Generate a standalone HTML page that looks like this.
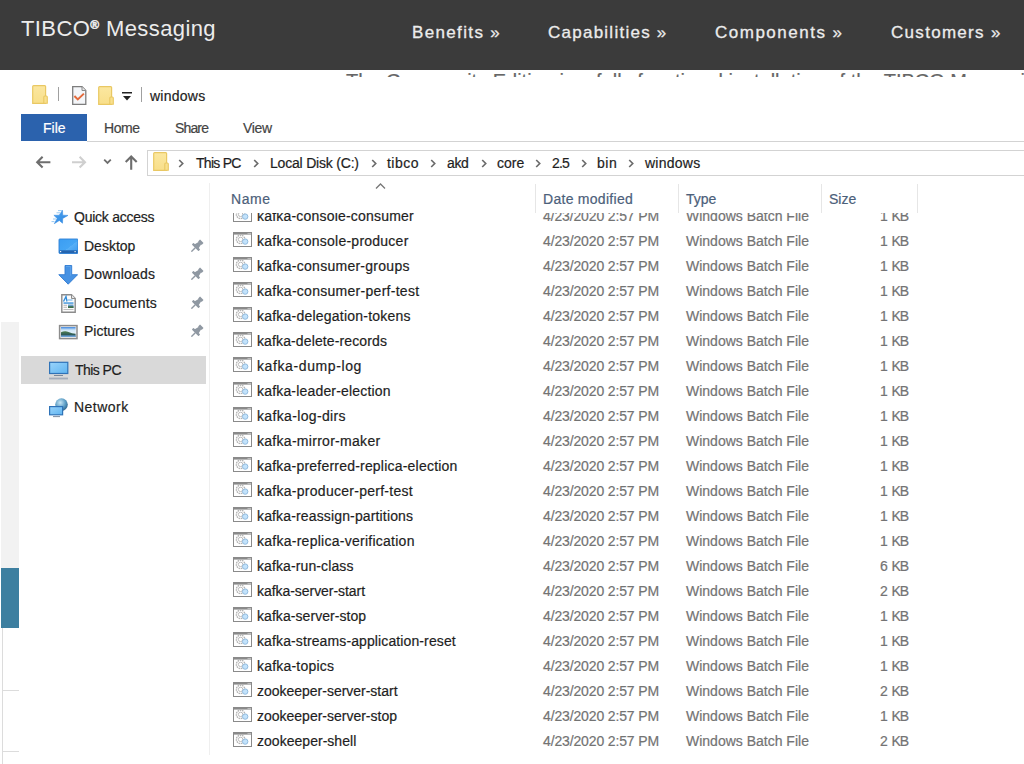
<!DOCTYPE html>
<html><head><meta charset="utf-8"><style>
html,body{margin:0;padding:0;width:1024px;height:764px;overflow:hidden;background:#fff;position:relative}
.t{position:absolute;white-space:pre;font-family:"Liberation Sans", sans-serif;-webkit-text-stroke:0.2px currentColor}
.r{position:absolute;display:block}
</style></head><body>
<div class="r" style="left:0px;top:0px;width:1024px;height:70px;background:#3b3b3b;"></div>
<div class="t" style="left:21px;top:17.68px;font-size:22px;line-height:22px;color:#ececec;font-weight:400;letter-spacing:0.4px;-webkit-text-stroke:0;">TIBCO<sup style="font-size:12px;vertical-align:0;position:relative;top:-7px;font-weight:700;-webkit-text-stroke:0.5px #ececec">®</sup> Messaging</div>
<div class="t" style="left:412px;top:24.01px;font-size:17px;line-height:17px;color:#ececec;font-weight:400;letter-spacing:1.35px;-webkit-text-stroke:0.3px #ececec;">Benefits »</div>
<div class="t" style="left:548px;top:24.01px;font-size:17px;line-height:17px;color:#ececec;font-weight:400;letter-spacing:1.25px;-webkit-text-stroke:0.3px #ececec;">Capabilities »</div>
<div class="t" style="left:715px;top:24.01px;font-size:17px;line-height:17px;color:#ececec;font-weight:400;letter-spacing:1.5px;-webkit-text-stroke:0.3px #ececec;">Components »</div>
<div class="t" style="left:891px;top:24.01px;font-size:17px;line-height:17px;color:#ececec;font-weight:400;letter-spacing:1.3px;-webkit-text-stroke:0.3px #ececec;">Customers »</div>
<div class="r" style="left:0;top:70px;width:1024px;height:7px;overflow:hidden"><div class="t" style="left:346px;top:1.4px;font-size:20px;line-height:20px;color:#666">The Community Edition is a fully functional installation of the TIBCO Messaging</div></div>
<div class="r" style="left:1px;top:322px;width:18px;height:246px;background:#f2f2f2;"></div>
<div class="r" style="left:1px;top:568px;width:18px;height:60px;background:#3d7fa0;"></div>
<div class="r" style="left:2px;top:628px;width:1px;height:136px;background:#dcdcdc;"></div>
<div class="r" style="left:2px;top:690px;width:17px;height:1px;background:#dcdcdc;"></div>
<div class="r" style="left:2px;top:751px;width:17px;height:1px;background:#dcdcdc;"></div>
<svg class="r" style="left:32px;top:85px;" width="16" height="19" viewBox="0 0 16 19"><defs><linearGradient id="gf3285" x1="0" y1="0" x2="0" y2="1"><stop offset="0" stop-color="#fbe7a0"/><stop offset="1" stop-color="#f8df8a"/></linearGradient></defs><path d="M0.7 1.6 Q0.7 0.7 1.6 0.7 H12.7 Q13.6 0.7 13.6 1.6 V18.3 H0.7 Z" fill="url(#gf3285)" stroke="#e9c863" stroke-width="1.2"/><path d="M11.8 18.3 V12 Q11.8 11 12.8 11 H14.4 Q15.3 11 15.3 12 V18.3 Z" fill="#f9e08e" stroke="#e9c863" stroke-width="1.1"/></svg>
<div class="r" style="left:58px;top:87px;width:1px;height:14px;background:#a0a0a0;"></div>
<svg class="r" style="left:72px;top:86px;" width="15" height="19" viewBox="0 0 15 19"><path d="M0.7 0.7 H10 L13.8 4.5 V18.3 H0.7 Z" fill="#f4f6f9" stroke="#7d7d7d" stroke-width="1.3"/><path d="M10 0.7 V4.5 H13.8" fill="#e8e8e8" stroke="#8a8a8a" stroke-width="1"/><path d="M2.4 10 L5.8 13.4 L11.9 7.6" fill="none" stroke="#e36a3c" stroke-width="2"/></svg>
<svg class="r" style="left:98px;top:86px;" width="16" height="19" viewBox="0 0 16 19"><defs><linearGradient id="gf9886" x1="0" y1="0" x2="0" y2="1"><stop offset="0" stop-color="#fbe7a0"/><stop offset="1" stop-color="#f8df8a"/></linearGradient></defs><path d="M0.7 1.6 Q0.7 0.7 1.6 0.7 H12.7 Q13.6 0.7 13.6 1.6 V18.3 H0.7 Z" fill="url(#gf9886)" stroke="#e9c863" stroke-width="1.2"/><path d="M11.8 18.3 V12 Q11.8 11 12.8 11 H14.4 Q15.3 11 15.3 12 V18.3 Z" fill="#f9e08e" stroke="#e9c863" stroke-width="1.1"/></svg>
<svg class="r" style="left:122px;top:92px;" width="10" height="9" viewBox="0 0 10 9"><rect x="0" y="0" width="10" height="1.5" fill="#222"/><path d="M1 4 H9 L5 8.5 Z" fill="#222"/></svg>
<div class="r" style="left:141px;top:87px;width:1px;height:15px;background:#a0a0a0;"></div>
<div class="t" style="left:150px;top:88.55px;font-size:14px;line-height:14px;color:#1e1e1e;font-weight:400;letter-spacing:0.25px;">windows</div>
<div class="r" style="left:21px;top:114px;width:66px;height:27px;background:#2b62ad;"></div>
<div class="t" style="left:43px;top:120.95px;font-size:14px;line-height:14px;color:#ffffff;font-weight:400;">File</div>
<div class="t" style="left:104px;top:121.15px;font-size:14px;line-height:14px;color:#444;font-weight:400;letter-spacing:-0.43px;">Home</div>
<div class="t" style="left:175px;top:121.15px;font-size:14px;line-height:14px;color:#444;font-weight:400;letter-spacing:-0.85px;">Share</div>
<div class="t" style="left:243px;top:121.15px;font-size:14px;line-height:14px;color:#444;font-weight:400;letter-spacing:-0.33px;">View</div>
<div class="r" style="left:87px;top:141px;width:937px;height:1px;background:#d3d3d3;"></div>
<svg class="r" style="left:35px;top:155px;" width="17" height="15" viewBox="0 0 17 15"><path d="M2.2 7.2 H15.4 M7.6 1.8 L2.2 7.2 L7.6 12.6" fill="none" stroke="#6e6e6e" stroke-width="2.1"/></svg>
<svg class="r" style="left:71px;top:155px;" width="17" height="15" viewBox="0 0 17 15"><path d="M14 7.2 H1 M8.6 1.8 L14 7.2 L8.6 12.6" fill="none" stroke="#cfcfcf" stroke-width="2.1"/></svg>
<svg class="r" style="left:103px;top:158px;" width="9" height="7" viewBox="0 0 9 7"><path d="M1.2 1.6 L4.5 4.9 L7.8 1.6" fill="none" stroke="#6e6e6e" stroke-width="1.8"/></svg>
<svg class="r" style="left:124px;top:154px;" width="15" height="17" viewBox="0 0 15 17"><path d="M7.2 15.8 V2.5 M1.7 8 L7.2 2.5 L12.7 8" fill="none" stroke="#6e6e6e" stroke-width="2.1"/></svg>
<div class="r" style="left:147px;top:150px;width:877px;height:26px;background:#fff;border:1px solid #d3d3d3;border-right:none;box-sizing:border-box"></div>
<svg class="r" style="left:153px;top:152px;" width="16" height="19" viewBox="0 0 16 19"><defs><linearGradient id="gf153152" x1="0" y1="0" x2="0" y2="1"><stop offset="0" stop-color="#fbe7a0"/><stop offset="1" stop-color="#f8df8a"/></linearGradient></defs><path d="M0.7 1.6 Q0.7 0.7 1.6 0.7 H12.7 Q13.6 0.7 13.6 1.6 V18.3 H0.7 Z" fill="url(#gf153152)" stroke="#e9c863" stroke-width="1.2"/><path d="M11.8 18.3 V12 Q11.8 11 12.8 11 H14.4 Q15.3 11 15.3 12 V18.3 Z" fill="#f9e08e" stroke="#e9c863" stroke-width="1.1"/></svg>
<svg class="r" style="left:178px;top:159px;" width="6" height="9" viewBox="0 0 6 9"><path d="M1.2 1 L4.7 4.5 L1.2 8" fill="none" stroke="#6b6b6b" stroke-width="1.7"/></svg>
<svg class="r" style="left:253px;top:159px;" width="6" height="9" viewBox="0 0 6 9"><path d="M1.2 1 L4.7 4.5 L1.2 8" fill="none" stroke="#6b6b6b" stroke-width="1.7"/></svg>
<svg class="r" style="left:371px;top:159px;" width="6" height="9" viewBox="0 0 6 9"><path d="M1.2 1 L4.7 4.5 L1.2 8" fill="none" stroke="#6b6b6b" stroke-width="1.7"/></svg>
<svg class="r" style="left:430px;top:159px;" width="6" height="9" viewBox="0 0 6 9"><path d="M1.2 1 L4.7 4.5 L1.2 8" fill="none" stroke="#6b6b6b" stroke-width="1.7"/></svg>
<svg class="r" style="left:481px;top:159px;" width="6" height="9" viewBox="0 0 6 9"><path d="M1.2 1 L4.7 4.5 L1.2 8" fill="none" stroke="#6b6b6b" stroke-width="1.7"/></svg>
<svg class="r" style="left:535px;top:159px;" width="6" height="9" viewBox="0 0 6 9"><path d="M1.2 1 L4.7 4.5 L1.2 8" fill="none" stroke="#6b6b6b" stroke-width="1.7"/></svg>
<svg class="r" style="left:581px;top:159px;" width="6" height="9" viewBox="0 0 6 9"><path d="M1.2 1 L4.7 4.5 L1.2 8" fill="none" stroke="#6b6b6b" stroke-width="1.7"/></svg>
<svg class="r" style="left:628px;top:159px;" width="6" height="9" viewBox="0 0 6 9"><path d="M1.2 1 L4.7 4.5 L1.2 8" fill="none" stroke="#6b6b6b" stroke-width="1.7"/></svg>
<div class="t" style="left:196px;top:155.85px;font-size:14px;line-height:14px;color:#1e1e1e;font-weight:400;letter-spacing:-0.73px;">This PC</div>
<div class="t" style="left:270px;top:155.85px;font-size:14px;line-height:14px;color:#1e1e1e;font-weight:400;letter-spacing:-0.2px;">Local Disk (C:)</div>
<div class="t" style="left:387px;top:155.85px;font-size:14px;line-height:14px;color:#1e1e1e;font-weight:400;letter-spacing:0.47px;">tibco</div>
<div class="t" style="left:447px;top:155.85px;font-size:14px;line-height:14px;color:#1e1e1e;font-weight:400;letter-spacing:-0.35px;">akd</div>
<div class="t" style="left:497px;top:155.85px;font-size:14px;line-height:14px;color:#1e1e1e;font-weight:400;">core</div>
<div class="t" style="left:552px;top:155.85px;font-size:14px;line-height:14px;color:#1e1e1e;font-weight:400;letter-spacing:-0.9px;">2.5</div>
<div class="t" style="left:597px;top:155.85px;font-size:14px;line-height:14px;color:#1e1e1e;font-weight:400;letter-spacing:0.55px;">bin</div>
<div class="t" style="left:645px;top:155.85px;font-size:14px;line-height:14px;color:#1e1e1e;font-weight:400;letter-spacing:0.25px;">windows</div>
<div class="r" style="left:209px;top:183px;width:1px;height:572px;background:#efefef;"></div>
<div class="r" style="left:21px;top:356px;width:185px;height:28px;background:#d9d9d9;"></div>
<div class="t" style="left:74px;top:210.15px;font-size:14px;line-height:14px;color:#1e1e1e;font-weight:400;letter-spacing:-0.24px;">Quick access</div>
<div class="t" style="left:84px;top:238.95px;font-size:14px;line-height:14px;color:#1e1e1e;font-weight:400;">Desktop</div>
<div class="t" style="left:84px;top:267.15px;font-size:14px;line-height:14px;color:#1e1e1e;font-weight:400;letter-spacing:0.21px;">Downloads</div>
<div class="t" style="left:84px;top:296.15px;font-size:14px;line-height:14px;color:#1e1e1e;font-weight:400;letter-spacing:0.25px;">Documents</div>
<div class="t" style="left:84px;top:324.45px;font-size:14px;line-height:14px;color:#1e1e1e;font-weight:400;">Pictures</div>
<div class="t" style="left:75px;top:362.95px;font-size:14px;line-height:14px;color:#1e1e1e;font-weight:400;letter-spacing:-0.55px;">This PC</div>
<div class="t" style="left:74px;top:400.45px;font-size:14px;line-height:14px;color:#1e1e1e;font-weight:400;letter-spacing:0.47px;">Network</div>
<svg class="r" style="left:46px;top:204px;" width="36" height="24" viewBox="0 0 36 24"><defs><linearGradient id="gs" x1="0" y1="0" x2="1" y2="1"><stop offset="0" stop-color="#4aa3f0"/><stop offset="1" stop-color="#2f86e0"/></linearGradient></defs><path d="M16.5,6.3 L16.7,11.2 L22.0,11.4 L16.7,14.4 L16.5,19.2 L13.3,16.5 L8.3,19.7 L11.2,14.5 L7.9,11.3 L13.2,11.2 Z" fill="url(#gs)" stroke="#3a8ee4" stroke-width="0.6" stroke-linejoin="round"/><path d="M12 6.6 H16 M10.5 8.8 H14.2 M7 15 H10 M5.5 17.6 H8.5" stroke="#8cc3f2" stroke-width="0.9"/></svg>
<svg class="r" style="left:58px;top:238px;" width="20" height="16" viewBox="0 0 20 16"><defs><linearGradient id="gd" x1="0" y1="0" x2="1" y2="1"><stop offset="0" stop-color="#3b9df2"/><stop offset="0.55" stop-color="#45a6f5"/><stop offset="0.56" stop-color="#57b0f7"/><stop offset="1" stop-color="#3a98ee"/></linearGradient></defs><rect x="1" y="1" width="19" height="14.5" rx="0.8" fill="url(#gd)" stroke="#2d7fd6" stroke-width="0.9"/><rect x="1.5" y="12.3" width="18" height="2.8" fill="#2564ae"/><rect x="2" y="13" width="1.2" height="1.2" fill="#e8f2fb"/><rect x="16.5" y="13" width="1.2" height="1.2" fill="#e8f2fb"/></svg>
<svg class="r" style="left:58px;top:265px;" width="20" height="20" viewBox="0 0 20 20"><path d="M7 0.5 H13.7 V9.7 H19.6 L10.2 19.2 L0.8 9.7 H7 Z" fill="#4792e3" stroke="#2f7bd2" stroke-width="0.9" stroke-linejoin="round"/><path d="M8 1.5 H12.7 V10.7" fill="none" stroke="#63a8ee" stroke-width="0.8"/></svg>
<svg class="r" style="left:61px;top:294px;" width="15" height="19" viewBox="0 0 15 19"><path d="M0.8 0.8 H10.5 L14.2 4.5 V18.2 H0.8 Z" fill="#fbfbfb" stroke="#8c8c8c" stroke-width="1.4"/><path d="M10.5 0.8 V4.5 H14.2" fill="#e6e6e6" stroke="#8c8c8c" stroke-width="1"/><path d="M2.5 7.5 L5 2.5 L6 7.5" fill="none" stroke="#2e8ad8" stroke-width="1.3"/><rect x="6.5" y="5.5" width="5" height="1" fill="#6ab0e8"/><rect x="2.5" y="8.4" width="10" height="1.3" fill="#2e8ad8"/><rect x="2.5" y="10.8" width="3.5" height="0.9" fill="#b0b0b0"/><rect x="2.5" y="12.8" width="3.5" height="0.9" fill="#b0b0b0"/><rect x="7" y="10.5" width="5.5" height="3.5" fill="#6a9ec8"/><rect x="7" y="12.2" width="5.5" height="1.8" fill="#3c6e4a"/><rect x="2.5" y="15" width="10" height="0.9" fill="#b8b8b8"/></svg>
<svg class="r" style="left:58px;top:324px;" width="20" height="16" viewBox="0 0 20 16"><defs><linearGradient id="gp" x1="0" y1="0" x2="0" y2="1"><stop offset="0" stop-color="#3f86de"/><stop offset="0.3" stop-color="#cfe6f7"/><stop offset="1" stop-color="#f2f8fc"/></linearGradient><linearGradient id="gh" x1="0" y1="0" x2="0" y2="1"><stop offset="0" stop-color="#4d7d4e"/><stop offset="0.6" stop-color="#2f5a5a"/><stop offset="1" stop-color="#5b93c9"/></linearGradient></defs><rect x="1.6" y="1.6" width="17.4" height="13" fill="#f3f3f3" stroke="#8c8c8c" stroke-width="1.5"/><rect x="3" y="3" width="14.6" height="10" fill="url(#gp)"/><path d="M3 8.3 Q7 6.6 10.5 8 Q14 9.4 17.6 9.8 V13 H3 Z" fill="url(#gh)"/><rect x="3" y="11.6" width="14.6" height="1.4" fill="#6aa0d4"/></svg>
<svg class="r" style="left:188px;top:238px;" width="17" height="17" viewBox="0 0 17 17"><g transform="rotate(45 8.5 8.5)" fill="#8f98a2"><rect x="6" y="1" width="5" height="2.8" rx="0.4"/><path d="M6.8 3.4 H10.2 L11.4 8.6 H5.6 Z"/><rect x="3.8" y="8" width="9.4" height="2.4" rx="0.6"/><rect x="7.8" y="10" width="1.4" height="5.8" rx="0.6"/></g></svg>
<svg class="r" style="left:188px;top:266px;" width="17" height="17" viewBox="0 0 17 17"><g transform="rotate(45 8.5 8.5)" fill="#8f98a2"><rect x="6" y="1" width="5" height="2.8" rx="0.4"/><path d="M6.8 3.4 H10.2 L11.4 8.6 H5.6 Z"/><rect x="3.8" y="8" width="9.4" height="2.4" rx="0.6"/><rect x="7.8" y="10" width="1.4" height="5.8" rx="0.6"/></g></svg>
<svg class="r" style="left:188px;top:295px;" width="17" height="17" viewBox="0 0 17 17"><g transform="rotate(45 8.5 8.5)" fill="#8f98a2"><rect x="6" y="1" width="5" height="2.8" rx="0.4"/><path d="M6.8 3.4 H10.2 L11.4 8.6 H5.6 Z"/><rect x="3.8" y="8" width="9.4" height="2.4" rx="0.6"/><rect x="7.8" y="10" width="1.4" height="5.8" rx="0.6"/></g></svg>
<svg class="r" style="left:188px;top:323px;" width="17" height="17" viewBox="0 0 17 17"><g transform="rotate(45 8.5 8.5)" fill="#8f98a2"><rect x="6" y="1" width="5" height="2.8" rx="0.4"/><path d="M6.8 3.4 H10.2 L11.4 8.6 H5.6 Z"/><rect x="3.8" y="8" width="9.4" height="2.4" rx="0.6"/><rect x="7.8" y="10" width="1.4" height="5.8" rx="0.6"/></g></svg>
<svg class="r" style="left:48px;top:361px;" width="22" height="20" viewBox="0 0 22 20"><defs><linearGradient id="gm" x1="0" y1="0" x2="1" y2="1"><stop offset="0" stop-color="#9ad4fb"/><stop offset="1" stop-color="#5fb4f0"/></linearGradient></defs><rect x="1.6" y="1.3" width="18.2" height="11.2" fill="url(#gm)" stroke="#2f73b8" stroke-width="1.2"/><rect x="6" y="14" width="9" height="0.9" fill="#6f7f95"/><rect x="1" y="16.6" width="19" height="1.8" fill="#a4adbb"/></svg>
<svg class="r" style="left:48px;top:397px;" width="22" height="22" viewBox="0 0 22 22"><defs><radialGradient id="gg" cx="0.4" cy="0.35" r="0.7"><stop offset="0" stop-color="#c8e6f5"/><stop offset="0.6" stop-color="#5a9cc4"/><stop offset="1" stop-color="#2e5f86"/></radialGradient></defs><circle cx="13.5" cy="7.6" r="6.3" fill="url(#gg)"/><rect x="1.6" y="9.6" width="13" height="8.2" fill="url(#gm)" stroke="#2f73b8" stroke-width="1.2"/><rect x="5" y="19.2" width="7" height="0.9" fill="#6f7f95"/></svg>
<div class="t" style="left:231px;top:192.05px;font-size:14px;line-height:14px;color:#4c607a;font-weight:400;letter-spacing:0.57px;">Name</div>
<svg class="r" style="left:375px;top:183.4px;" width="11" height="6" viewBox="0 0 11 6"><path d="M1 5.5 L5.5 1 L10 5.5" fill="none" stroke="#777" stroke-width="1.3"/></svg>
<div class="r" style="left:535px;top:184px;width:1px;height:29px;background:#e6e6e6;"></div>
<div class="r" style="left:678px;top:184px;width:1px;height:29px;background:#e6e6e6;"></div>
<div class="r" style="left:821px;top:184px;width:1px;height:29px;background:#e6e6e6;"></div>
<div class="r" style="left:917px;top:184px;width:1px;height:29px;background:#e6e6e6;"></div>
<div class="t" style="left:543px;top:192.05px;font-size:14px;line-height:14px;color:#4c607a;font-weight:400;letter-spacing:0.28px;">Date modified</div>
<div class="t" style="left:686px;top:192.05px;font-size:14px;line-height:14px;color:#4c607a;font-weight:400;">Type</div>
<div class="t" style="left:829px;top:192.05px;font-size:14px;line-height:14px;color:#4c607a;font-weight:400;">Size</div>
<div class="r" style="left:210px;top:213px;width:814px;height:542px;overflow:hidden"><div style="position:absolute;left:-210px;top:-213px;width:1024px;height:764px"><svg class="r" style="left:233px;top:207px" width="19" height="15" viewBox="0 0 19 15"><rect x="0.5" y="0.5" width="18" height="14" fill="#fff" stroke="#8a8a8a"/><rect x="0" y="0" width="19" height="2.6" fill="#8a8a8a"/><rect x="14.5" y="1" width="3.5" height="1.3" fill="#bdbdbd"/><circle cx="7.6" cy="7.4" r="4.2" fill="none" stroke="#b4b4b4" stroke-width="1.4" stroke-dasharray="1.6 0.7"/><circle cx="7.6" cy="7.4" r="2.2" fill="none" stroke="#bcbcbc" stroke-width="1"/><circle cx="12.2" cy="9.6" r="2.7" fill="#c2e2fb" stroke="#8ab6da" stroke-width="0.9"/></svg><div class="t" style="left:257px;top:209.15px;font-size:14px;line-height:14px;color:#1e1e1e;letter-spacing:0.2px">kafka-console-consumer</div><div class="t" style="left:543px;top:209.15px;font-size:14px;line-height:14px;color:#737373;letter-spacing:-0.14px">4/23/2020 2:57 PM</div><div class="t" style="left:686px;top:209.15px;font-size:14px;line-height:14px;color:#737373">Windows Batch File</div><div class="t" style="left:880px;top:209.15px;font-size:14px;line-height:14px;color:#737373">1</div><div class="t" style="left:891.5px;letter-spacing:-1.2px;top:209.15px;font-size:14px;line-height:14px;color:#737373">KB</div><svg class="r" style="left:233px;top:232px" width="19" height="15" viewBox="0 0 19 15"><rect x="0.5" y="0.5" width="18" height="14" fill="#fff" stroke="#8a8a8a"/><rect x="0" y="0" width="19" height="2.6" fill="#8a8a8a"/><rect x="14.5" y="1" width="3.5" height="1.3" fill="#bdbdbd"/><circle cx="7.6" cy="7.4" r="4.2" fill="none" stroke="#b4b4b4" stroke-width="1.4" stroke-dasharray="1.6 0.7"/><circle cx="7.6" cy="7.4" r="2.2" fill="none" stroke="#bcbcbc" stroke-width="1"/><circle cx="12.2" cy="9.6" r="2.7" fill="#c2e2fb" stroke="#8ab6da" stroke-width="0.9"/></svg><div class="t" style="left:257px;top:234.15px;font-size:14px;line-height:14px;color:#1e1e1e;letter-spacing:0.238px">kafka-console-producer</div><div class="t" style="left:543px;top:234.15px;font-size:14px;line-height:14px;color:#737373;letter-spacing:-0.14px">4/23/2020 2:57 PM</div><div class="t" style="left:686px;top:234.15px;font-size:14px;line-height:14px;color:#737373">Windows Batch File</div><div class="t" style="left:880px;top:234.15px;font-size:14px;line-height:14px;color:#737373">1</div><div class="t" style="left:891.5px;letter-spacing:-1.2px;top:234.15px;font-size:14px;line-height:14px;color:#737373">KB</div><svg class="r" style="left:233px;top:257px" width="19" height="15" viewBox="0 0 19 15"><rect x="0.5" y="0.5" width="18" height="14" fill="#fff" stroke="#8a8a8a"/><rect x="0" y="0" width="19" height="2.6" fill="#8a8a8a"/><rect x="14.5" y="1" width="3.5" height="1.3" fill="#bdbdbd"/><circle cx="7.6" cy="7.4" r="4.2" fill="none" stroke="#b4b4b4" stroke-width="1.4" stroke-dasharray="1.6 0.7"/><circle cx="7.6" cy="7.4" r="2.2" fill="none" stroke="#bcbcbc" stroke-width="1"/><circle cx="12.2" cy="9.6" r="2.7" fill="#c2e2fb" stroke="#8ab6da" stroke-width="0.9"/></svg><div class="t" style="left:257px;top:259.15px;font-size:14px;line-height:14px;color:#1e1e1e;letter-spacing:0.27px">kafka-consumer-groups</div><div class="t" style="left:543px;top:259.15px;font-size:14px;line-height:14px;color:#737373;letter-spacing:-0.14px">4/23/2020 2:57 PM</div><div class="t" style="left:686px;top:259.15px;font-size:14px;line-height:14px;color:#737373">Windows Batch File</div><div class="t" style="left:880px;top:259.15px;font-size:14px;line-height:14px;color:#737373">1</div><div class="t" style="left:891.5px;letter-spacing:-1.2px;top:259.15px;font-size:14px;line-height:14px;color:#737373">KB</div><svg class="r" style="left:233px;top:282px" width="19" height="15" viewBox="0 0 19 15"><rect x="0.5" y="0.5" width="18" height="14" fill="#fff" stroke="#8a8a8a"/><rect x="0" y="0" width="19" height="2.6" fill="#8a8a8a"/><rect x="14.5" y="1" width="3.5" height="1.3" fill="#bdbdbd"/><circle cx="7.6" cy="7.4" r="4.2" fill="none" stroke="#b4b4b4" stroke-width="1.4" stroke-dasharray="1.6 0.7"/><circle cx="7.6" cy="7.4" r="2.2" fill="none" stroke="#bcbcbc" stroke-width="1"/><circle cx="12.2" cy="9.6" r="2.7" fill="#c2e2fb" stroke="#8ab6da" stroke-width="0.9"/></svg><div class="t" style="left:257px;top:284.15px;font-size:14px;line-height:14px;color:#1e1e1e;letter-spacing:0.283px">kafka-consumer-perf-test</div><div class="t" style="left:543px;top:284.15px;font-size:14px;line-height:14px;color:#737373;letter-spacing:-0.14px">4/23/2020 2:57 PM</div><div class="t" style="left:686px;top:284.15px;font-size:14px;line-height:14px;color:#737373">Windows Batch File</div><div class="t" style="left:880px;top:284.15px;font-size:14px;line-height:14px;color:#737373">1</div><div class="t" style="left:891.5px;letter-spacing:-1.2px;top:284.15px;font-size:14px;line-height:14px;color:#737373">KB</div><svg class="r" style="left:233px;top:307px" width="19" height="15" viewBox="0 0 19 15"><rect x="0.5" y="0.5" width="18" height="14" fill="#fff" stroke="#8a8a8a"/><rect x="0" y="0" width="19" height="2.6" fill="#8a8a8a"/><rect x="14.5" y="1" width="3.5" height="1.3" fill="#bdbdbd"/><circle cx="7.6" cy="7.4" r="4.2" fill="none" stroke="#b4b4b4" stroke-width="1.4" stroke-dasharray="1.6 0.7"/><circle cx="7.6" cy="7.4" r="2.2" fill="none" stroke="#bcbcbc" stroke-width="1"/><circle cx="12.2" cy="9.6" r="2.7" fill="#c2e2fb" stroke="#8ab6da" stroke-width="0.9"/></svg><div class="t" style="left:257px;top:309.15px;font-size:14px;line-height:14px;color:#1e1e1e;letter-spacing:0.223px">kafka-delegation-tokens</div><div class="t" style="left:543px;top:309.15px;font-size:14px;line-height:14px;color:#737373;letter-spacing:-0.14px">4/23/2020 2:57 PM</div><div class="t" style="left:686px;top:309.15px;font-size:14px;line-height:14px;color:#737373">Windows Batch File</div><div class="t" style="left:880px;top:309.15px;font-size:14px;line-height:14px;color:#737373">1</div><div class="t" style="left:891.5px;letter-spacing:-1.2px;top:309.15px;font-size:14px;line-height:14px;color:#737373">KB</div><svg class="r" style="left:233px;top:332px" width="19" height="15" viewBox="0 0 19 15"><rect x="0.5" y="0.5" width="18" height="14" fill="#fff" stroke="#8a8a8a"/><rect x="0" y="0" width="19" height="2.6" fill="#8a8a8a"/><rect x="14.5" y="1" width="3.5" height="1.3" fill="#bdbdbd"/><circle cx="7.6" cy="7.4" r="4.2" fill="none" stroke="#b4b4b4" stroke-width="1.4" stroke-dasharray="1.6 0.7"/><circle cx="7.6" cy="7.4" r="2.2" fill="none" stroke="#bcbcbc" stroke-width="1"/><circle cx="12.2" cy="9.6" r="2.7" fill="#c2e2fb" stroke="#8ab6da" stroke-width="0.9"/></svg><div class="t" style="left:257px;top:334.15px;font-size:14px;line-height:14px;color:#1e1e1e;letter-spacing:0.121px">kafka-delete-records</div><div class="t" style="left:543px;top:334.15px;font-size:14px;line-height:14px;color:#737373;letter-spacing:-0.14px">4/23/2020 2:57 PM</div><div class="t" style="left:686px;top:334.15px;font-size:14px;line-height:14px;color:#737373">Windows Batch File</div><div class="t" style="left:880px;top:334.15px;font-size:14px;line-height:14px;color:#737373">1</div><div class="t" style="left:891.5px;letter-spacing:-1.2px;top:334.15px;font-size:14px;line-height:14px;color:#737373">KB</div><svg class="r" style="left:233px;top:357px" width="19" height="15" viewBox="0 0 19 15"><rect x="0.5" y="0.5" width="18" height="14" fill="#fff" stroke="#8a8a8a"/><rect x="0" y="0" width="19" height="2.6" fill="#8a8a8a"/><rect x="14.5" y="1" width="3.5" height="1.3" fill="#bdbdbd"/><circle cx="7.6" cy="7.4" r="4.2" fill="none" stroke="#b4b4b4" stroke-width="1.4" stroke-dasharray="1.6 0.7"/><circle cx="7.6" cy="7.4" r="2.2" fill="none" stroke="#bcbcbc" stroke-width="1"/><circle cx="12.2" cy="9.6" r="2.7" fill="#c2e2fb" stroke="#8ab6da" stroke-width="0.9"/></svg><div class="t" style="left:257px;top:359.15px;font-size:14px;line-height:14px;color:#1e1e1e;letter-spacing:0.608px">kafka-dump-log</div><div class="t" style="left:543px;top:359.15px;font-size:14px;line-height:14px;color:#737373;letter-spacing:-0.14px">4/23/2020 2:57 PM</div><div class="t" style="left:686px;top:359.15px;font-size:14px;line-height:14px;color:#737373">Windows Batch File</div><div class="t" style="left:880px;top:359.15px;font-size:14px;line-height:14px;color:#737373">1</div><div class="t" style="left:891.5px;letter-spacing:-1.2px;top:359.15px;font-size:14px;line-height:14px;color:#737373">KB</div><svg class="r" style="left:233px;top:382px" width="19" height="15" viewBox="0 0 19 15"><rect x="0.5" y="0.5" width="18" height="14" fill="#fff" stroke="#8a8a8a"/><rect x="0" y="0" width="19" height="2.6" fill="#8a8a8a"/><rect x="14.5" y="1" width="3.5" height="1.3" fill="#bdbdbd"/><circle cx="7.6" cy="7.4" r="4.2" fill="none" stroke="#b4b4b4" stroke-width="1.4" stroke-dasharray="1.6 0.7"/><circle cx="7.6" cy="7.4" r="2.2" fill="none" stroke="#bcbcbc" stroke-width="1"/><circle cx="12.2" cy="9.6" r="2.7" fill="#c2e2fb" stroke="#8ab6da" stroke-width="0.9"/></svg><div class="t" style="left:257px;top:384.15px;font-size:14px;line-height:14px;color:#1e1e1e;letter-spacing:0.18px">kafka-leader-election</div><div class="t" style="left:543px;top:384.15px;font-size:14px;line-height:14px;color:#737373;letter-spacing:-0.14px">4/23/2020 2:57 PM</div><div class="t" style="left:686px;top:384.15px;font-size:14px;line-height:14px;color:#737373">Windows Batch File</div><div class="t" style="left:880px;top:384.15px;font-size:14px;line-height:14px;color:#737373">1</div><div class="t" style="left:891.5px;letter-spacing:-1.2px;top:384.15px;font-size:14px;line-height:14px;color:#737373">KB</div><svg class="r" style="left:233px;top:407px" width="19" height="15" viewBox="0 0 19 15"><rect x="0.5" y="0.5" width="18" height="14" fill="#fff" stroke="#8a8a8a"/><rect x="0" y="0" width="19" height="2.6" fill="#8a8a8a"/><rect x="14.5" y="1" width="3.5" height="1.3" fill="#bdbdbd"/><circle cx="7.6" cy="7.4" r="4.2" fill="none" stroke="#b4b4b4" stroke-width="1.4" stroke-dasharray="1.6 0.7"/><circle cx="7.6" cy="7.4" r="2.2" fill="none" stroke="#bcbcbc" stroke-width="1"/><circle cx="12.2" cy="9.6" r="2.7" fill="#c2e2fb" stroke="#8ab6da" stroke-width="0.9"/></svg><div class="t" style="left:257px;top:409.15px;font-size:14px;line-height:14px;color:#1e1e1e;letter-spacing:0.346px">kafka-log-dirs</div><div class="t" style="left:543px;top:409.15px;font-size:14px;line-height:14px;color:#737373;letter-spacing:-0.14px">4/23/2020 2:57 PM</div><div class="t" style="left:686px;top:409.15px;font-size:14px;line-height:14px;color:#737373">Windows Batch File</div><div class="t" style="left:880px;top:409.15px;font-size:14px;line-height:14px;color:#737373">1</div><div class="t" style="left:891.5px;letter-spacing:-1.2px;top:409.15px;font-size:14px;line-height:14px;color:#737373">KB</div><svg class="r" style="left:233px;top:432px" width="19" height="15" viewBox="0 0 19 15"><rect x="0.5" y="0.5" width="18" height="14" fill="#fff" stroke="#8a8a8a"/><rect x="0" y="0" width="19" height="2.6" fill="#8a8a8a"/><rect x="14.5" y="1" width="3.5" height="1.3" fill="#bdbdbd"/><circle cx="7.6" cy="7.4" r="4.2" fill="none" stroke="#b4b4b4" stroke-width="1.4" stroke-dasharray="1.6 0.7"/><circle cx="7.6" cy="7.4" r="2.2" fill="none" stroke="#bcbcbc" stroke-width="1"/><circle cx="12.2" cy="9.6" r="2.7" fill="#c2e2fb" stroke="#8ab6da" stroke-width="0.9"/></svg><div class="t" style="left:257px;top:434.15px;font-size:14px;line-height:14px;color:#1e1e1e;letter-spacing:0.288px">kafka-mirror-maker</div><div class="t" style="left:543px;top:434.15px;font-size:14px;line-height:14px;color:#737373;letter-spacing:-0.14px">4/23/2020 2:57 PM</div><div class="t" style="left:686px;top:434.15px;font-size:14px;line-height:14px;color:#737373">Windows Batch File</div><div class="t" style="left:880px;top:434.15px;font-size:14px;line-height:14px;color:#737373">1</div><div class="t" style="left:891.5px;letter-spacing:-1.2px;top:434.15px;font-size:14px;line-height:14px;color:#737373">KB</div><svg class="r" style="left:233px;top:457px" width="19" height="15" viewBox="0 0 19 15"><rect x="0.5" y="0.5" width="18" height="14" fill="#fff" stroke="#8a8a8a"/><rect x="0" y="0" width="19" height="2.6" fill="#8a8a8a"/><rect x="14.5" y="1" width="3.5" height="1.3" fill="#bdbdbd"/><circle cx="7.6" cy="7.4" r="4.2" fill="none" stroke="#b4b4b4" stroke-width="1.4" stroke-dasharray="1.6 0.7"/><circle cx="7.6" cy="7.4" r="2.2" fill="none" stroke="#bcbcbc" stroke-width="1"/><circle cx="12.2" cy="9.6" r="2.7" fill="#c2e2fb" stroke="#8ab6da" stroke-width="0.9"/></svg><div class="t" style="left:257px;top:459.15px;font-size:14px;line-height:14px;color:#1e1e1e;letter-spacing:0.213px">kafka-preferred-replica-election</div><div class="t" style="left:543px;top:459.15px;font-size:14px;line-height:14px;color:#737373;letter-spacing:-0.14px">4/23/2020 2:57 PM</div><div class="t" style="left:686px;top:459.15px;font-size:14px;line-height:14px;color:#737373">Windows Batch File</div><div class="t" style="left:880px;top:459.15px;font-size:14px;line-height:14px;color:#737373">1</div><div class="t" style="left:891.5px;letter-spacing:-1.2px;top:459.15px;font-size:14px;line-height:14px;color:#737373">KB</div><svg class="r" style="left:233px;top:482px" width="19" height="15" viewBox="0 0 19 15"><rect x="0.5" y="0.5" width="18" height="14" fill="#fff" stroke="#8a8a8a"/><rect x="0" y="0" width="19" height="2.6" fill="#8a8a8a"/><rect x="14.5" y="1" width="3.5" height="1.3" fill="#bdbdbd"/><circle cx="7.6" cy="7.4" r="4.2" fill="none" stroke="#b4b4b4" stroke-width="1.4" stroke-dasharray="1.6 0.7"/><circle cx="7.6" cy="7.4" r="2.2" fill="none" stroke="#bcbcbc" stroke-width="1"/><circle cx="12.2" cy="9.6" r="2.7" fill="#c2e2fb" stroke="#8ab6da" stroke-width="0.9"/></svg><div class="t" style="left:257px;top:484.15px;font-size:14px;line-height:14px;color:#1e1e1e;letter-spacing:0.274px">kafka-producer-perf-test</div><div class="t" style="left:543px;top:484.15px;font-size:14px;line-height:14px;color:#737373;letter-spacing:-0.14px">4/23/2020 2:57 PM</div><div class="t" style="left:686px;top:484.15px;font-size:14px;line-height:14px;color:#737373">Windows Batch File</div><div class="t" style="left:880px;top:484.15px;font-size:14px;line-height:14px;color:#737373">1</div><div class="t" style="left:891.5px;letter-spacing:-1.2px;top:484.15px;font-size:14px;line-height:14px;color:#737373">KB</div><svg class="r" style="left:233px;top:507px" width="19" height="15" viewBox="0 0 19 15"><rect x="0.5" y="0.5" width="18" height="14" fill="#fff" stroke="#8a8a8a"/><rect x="0" y="0" width="19" height="2.6" fill="#8a8a8a"/><rect x="14.5" y="1" width="3.5" height="1.3" fill="#bdbdbd"/><circle cx="7.6" cy="7.4" r="4.2" fill="none" stroke="#b4b4b4" stroke-width="1.4" stroke-dasharray="1.6 0.7"/><circle cx="7.6" cy="7.4" r="2.2" fill="none" stroke="#bcbcbc" stroke-width="1"/><circle cx="12.2" cy="9.6" r="2.7" fill="#c2e2fb" stroke="#8ab6da" stroke-width="0.9"/></svg><div class="t" style="left:257px;top:509.15px;font-size:14px;line-height:14px;color:#1e1e1e;letter-spacing:0.146px">kafka-reassign-partitions</div><div class="t" style="left:543px;top:509.15px;font-size:14px;line-height:14px;color:#737373;letter-spacing:-0.14px">4/23/2020 2:57 PM</div><div class="t" style="left:686px;top:509.15px;font-size:14px;line-height:14px;color:#737373">Windows Batch File</div><div class="t" style="left:880px;top:509.15px;font-size:14px;line-height:14px;color:#737373">1</div><div class="t" style="left:891.5px;letter-spacing:-1.2px;top:509.15px;font-size:14px;line-height:14px;color:#737373">KB</div><svg class="r" style="left:233px;top:532px" width="19" height="15" viewBox="0 0 19 15"><rect x="0.5" y="0.5" width="18" height="14" fill="#fff" stroke="#8a8a8a"/><rect x="0" y="0" width="19" height="2.6" fill="#8a8a8a"/><rect x="14.5" y="1" width="3.5" height="1.3" fill="#bdbdbd"/><circle cx="7.6" cy="7.4" r="4.2" fill="none" stroke="#b4b4b4" stroke-width="1.4" stroke-dasharray="1.6 0.7"/><circle cx="7.6" cy="7.4" r="2.2" fill="none" stroke="#bcbcbc" stroke-width="1"/><circle cx="12.2" cy="9.6" r="2.7" fill="#c2e2fb" stroke="#8ab6da" stroke-width="0.9"/></svg><div class="t" style="left:257px;top:534.15px;font-size:14px;line-height:14px;color:#1e1e1e;letter-spacing:0.26px">kafka-replica-verification</div><div class="t" style="left:543px;top:534.15px;font-size:14px;line-height:14px;color:#737373;letter-spacing:-0.14px">4/23/2020 2:57 PM</div><div class="t" style="left:686px;top:534.15px;font-size:14px;line-height:14px;color:#737373">Windows Batch File</div><div class="t" style="left:880px;top:534.15px;font-size:14px;line-height:14px;color:#737373">1</div><div class="t" style="left:891.5px;letter-spacing:-1.2px;top:534.15px;font-size:14px;line-height:14px;color:#737373">KB</div><svg class="r" style="left:233px;top:557px" width="19" height="15" viewBox="0 0 19 15"><rect x="0.5" y="0.5" width="18" height="14" fill="#fff" stroke="#8a8a8a"/><rect x="0" y="0" width="19" height="2.6" fill="#8a8a8a"/><rect x="14.5" y="1" width="3.5" height="1.3" fill="#bdbdbd"/><circle cx="7.6" cy="7.4" r="4.2" fill="none" stroke="#b4b4b4" stroke-width="1.4" stroke-dasharray="1.6 0.7"/><circle cx="7.6" cy="7.4" r="2.2" fill="none" stroke="#bcbcbc" stroke-width="1"/><circle cx="12.2" cy="9.6" r="2.7" fill="#c2e2fb" stroke="#8ab6da" stroke-width="0.9"/></svg><div class="t" style="left:257px;top:559.15px;font-size:14px;line-height:14px;color:#1e1e1e;letter-spacing:0.107px">kafka-run-class</div><div class="t" style="left:543px;top:559.15px;font-size:14px;line-height:14px;color:#737373;letter-spacing:-0.14px">4/23/2020 2:57 PM</div><div class="t" style="left:686px;top:559.15px;font-size:14px;line-height:14px;color:#737373">Windows Batch File</div><div class="t" style="left:880px;top:559.15px;font-size:14px;line-height:14px;color:#737373">6</div><div class="t" style="left:891.5px;letter-spacing:-1.2px;top:559.15px;font-size:14px;line-height:14px;color:#737373">KB</div><svg class="r" style="left:233px;top:582px" width="19" height="15" viewBox="0 0 19 15"><rect x="0.5" y="0.5" width="18" height="14" fill="#fff" stroke="#8a8a8a"/><rect x="0" y="0" width="19" height="2.6" fill="#8a8a8a"/><rect x="14.5" y="1" width="3.5" height="1.3" fill="#bdbdbd"/><circle cx="7.6" cy="7.4" r="4.2" fill="none" stroke="#b4b4b4" stroke-width="1.4" stroke-dasharray="1.6 0.7"/><circle cx="7.6" cy="7.4" r="2.2" fill="none" stroke="#bcbcbc" stroke-width="1"/><circle cx="12.2" cy="9.6" r="2.7" fill="#c2e2fb" stroke="#8ab6da" stroke-width="0.9"/></svg><div class="t" style="left:257px;top:584.15px;font-size:14px;line-height:14px;color:#1e1e1e;letter-spacing:-0.047px">kafka-server-start</div><div class="t" style="left:543px;top:584.15px;font-size:14px;line-height:14px;color:#737373;letter-spacing:-0.14px">4/23/2020 2:57 PM</div><div class="t" style="left:686px;top:584.15px;font-size:14px;line-height:14px;color:#737373">Windows Batch File</div><div class="t" style="left:880px;top:584.15px;font-size:14px;line-height:14px;color:#737373">2</div><div class="t" style="left:891.5px;letter-spacing:-1.2px;top:584.15px;font-size:14px;line-height:14px;color:#737373">KB</div><svg class="r" style="left:233px;top:607px" width="19" height="15" viewBox="0 0 19 15"><rect x="0.5" y="0.5" width="18" height="14" fill="#fff" stroke="#8a8a8a"/><rect x="0" y="0" width="19" height="2.6" fill="#8a8a8a"/><rect x="14.5" y="1" width="3.5" height="1.3" fill="#bdbdbd"/><circle cx="7.6" cy="7.4" r="4.2" fill="none" stroke="#b4b4b4" stroke-width="1.4" stroke-dasharray="1.6 0.7"/><circle cx="7.6" cy="7.4" r="2.2" fill="none" stroke="#bcbcbc" stroke-width="1"/><circle cx="12.2" cy="9.6" r="2.7" fill="#c2e2fb" stroke="#8ab6da" stroke-width="0.9"/></svg><div class="t" style="left:257px;top:609.15px;font-size:14px;line-height:14px;color:#1e1e1e;letter-spacing:0.063px">kafka-server-stop</div><div class="t" style="left:543px;top:609.15px;font-size:14px;line-height:14px;color:#737373;letter-spacing:-0.14px">4/23/2020 2:57 PM</div><div class="t" style="left:686px;top:609.15px;font-size:14px;line-height:14px;color:#737373">Windows Batch File</div><div class="t" style="left:880px;top:609.15px;font-size:14px;line-height:14px;color:#737373">1</div><div class="t" style="left:891.5px;letter-spacing:-1.2px;top:609.15px;font-size:14px;line-height:14px;color:#737373">KB</div><svg class="r" style="left:233px;top:632px" width="19" height="15" viewBox="0 0 19 15"><rect x="0.5" y="0.5" width="18" height="14" fill="#fff" stroke="#8a8a8a"/><rect x="0" y="0" width="19" height="2.6" fill="#8a8a8a"/><rect x="14.5" y="1" width="3.5" height="1.3" fill="#bdbdbd"/><circle cx="7.6" cy="7.4" r="4.2" fill="none" stroke="#b4b4b4" stroke-width="1.4" stroke-dasharray="1.6 0.7"/><circle cx="7.6" cy="7.4" r="2.2" fill="none" stroke="#bcbcbc" stroke-width="1"/><circle cx="12.2" cy="9.6" r="2.7" fill="#c2e2fb" stroke="#8ab6da" stroke-width="0.9"/></svg><div class="t" style="left:257px;top:634.15px;font-size:14px;line-height:14px;color:#1e1e1e;letter-spacing:0.113px">kafka-streams-application-reset</div><div class="t" style="left:543px;top:634.15px;font-size:14px;line-height:14px;color:#737373;letter-spacing:-0.14px">4/23/2020 2:57 PM</div><div class="t" style="left:686px;top:634.15px;font-size:14px;line-height:14px;color:#737373">Windows Batch File</div><div class="t" style="left:880px;top:634.15px;font-size:14px;line-height:14px;color:#737373">1</div><div class="t" style="left:891.5px;letter-spacing:-1.2px;top:634.15px;font-size:14px;line-height:14px;color:#737373">KB</div><svg class="r" style="left:233px;top:657px" width="19" height="15" viewBox="0 0 19 15"><rect x="0.5" y="0.5" width="18" height="14" fill="#fff" stroke="#8a8a8a"/><rect x="0" y="0" width="19" height="2.6" fill="#8a8a8a"/><rect x="14.5" y="1" width="3.5" height="1.3" fill="#bdbdbd"/><circle cx="7.6" cy="7.4" r="4.2" fill="none" stroke="#b4b4b4" stroke-width="1.4" stroke-dasharray="1.6 0.7"/><circle cx="7.6" cy="7.4" r="2.2" fill="none" stroke="#bcbcbc" stroke-width="1"/><circle cx="12.2" cy="9.6" r="2.7" fill="#c2e2fb" stroke="#8ab6da" stroke-width="0.9"/></svg><div class="t" style="left:257px;top:659.15px;font-size:14px;line-height:14px;color:#1e1e1e;letter-spacing:0.2px">kafka-topics</div><div class="t" style="left:543px;top:659.15px;font-size:14px;line-height:14px;color:#737373;letter-spacing:-0.14px">4/23/2020 2:57 PM</div><div class="t" style="left:686px;top:659.15px;font-size:14px;line-height:14px;color:#737373">Windows Batch File</div><div class="t" style="left:880px;top:659.15px;font-size:14px;line-height:14px;color:#737373">1</div><div class="t" style="left:891.5px;letter-spacing:-1.2px;top:659.15px;font-size:14px;line-height:14px;color:#737373">KB</div><svg class="r" style="left:233px;top:682px" width="19" height="15" viewBox="0 0 19 15"><rect x="0.5" y="0.5" width="18" height="14" fill="#fff" stroke="#8a8a8a"/><rect x="0" y="0" width="19" height="2.6" fill="#8a8a8a"/><rect x="14.5" y="1" width="3.5" height="1.3" fill="#bdbdbd"/><circle cx="7.6" cy="7.4" r="4.2" fill="none" stroke="#b4b4b4" stroke-width="1.4" stroke-dasharray="1.6 0.7"/><circle cx="7.6" cy="7.4" r="2.2" fill="none" stroke="#bcbcbc" stroke-width="1"/><circle cx="12.2" cy="9.6" r="2.7" fill="#c2e2fb" stroke="#8ab6da" stroke-width="0.9"/></svg><div class="t" style="left:257px;top:684.15px;font-size:14px;line-height:14px;color:#1e1e1e;letter-spacing:-0.014px">zookeeper-server-start</div><div class="t" style="left:543px;top:684.15px;font-size:14px;line-height:14px;color:#737373;letter-spacing:-0.14px">4/23/2020 2:57 PM</div><div class="t" style="left:686px;top:684.15px;font-size:14px;line-height:14px;color:#737373">Windows Batch File</div><div class="t" style="left:880px;top:684.15px;font-size:14px;line-height:14px;color:#737373">2</div><div class="t" style="left:891.5px;letter-spacing:-1.2px;top:684.15px;font-size:14px;line-height:14px;color:#737373">KB</div><svg class="r" style="left:233px;top:707px" width="19" height="15" viewBox="0 0 19 15"><rect x="0.5" y="0.5" width="18" height="14" fill="#fff" stroke="#8a8a8a"/><rect x="0" y="0" width="19" height="2.6" fill="#8a8a8a"/><rect x="14.5" y="1" width="3.5" height="1.3" fill="#bdbdbd"/><circle cx="7.6" cy="7.4" r="4.2" fill="none" stroke="#b4b4b4" stroke-width="1.4" stroke-dasharray="1.6 0.7"/><circle cx="7.6" cy="7.4" r="2.2" fill="none" stroke="#bcbcbc" stroke-width="1"/><circle cx="12.2" cy="9.6" r="2.7" fill="#c2e2fb" stroke="#8ab6da" stroke-width="0.9"/></svg><div class="t" style="left:257px;top:709.15px;font-size:14px;line-height:14px;color:#1e1e1e;letter-spacing:-0.005px">zookeeper-server-stop</div><div class="t" style="left:543px;top:709.15px;font-size:14px;line-height:14px;color:#737373;letter-spacing:-0.14px">4/23/2020 2:57 PM</div><div class="t" style="left:686px;top:709.15px;font-size:14px;line-height:14px;color:#737373">Windows Batch File</div><div class="t" style="left:880px;top:709.15px;font-size:14px;line-height:14px;color:#737373">1</div><div class="t" style="left:891.5px;letter-spacing:-1.2px;top:709.15px;font-size:14px;line-height:14px;color:#737373">KB</div><svg class="r" style="left:233px;top:732px" width="19" height="15" viewBox="0 0 19 15"><rect x="0.5" y="0.5" width="18" height="14" fill="#fff" stroke="#8a8a8a"/><rect x="0" y="0" width="19" height="2.6" fill="#8a8a8a"/><rect x="14.5" y="1" width="3.5" height="1.3" fill="#bdbdbd"/><circle cx="7.6" cy="7.4" r="4.2" fill="none" stroke="#b4b4b4" stroke-width="1.4" stroke-dasharray="1.6 0.7"/><circle cx="7.6" cy="7.4" r="2.2" fill="none" stroke="#bcbcbc" stroke-width="1"/><circle cx="12.2" cy="9.6" r="2.7" fill="#c2e2fb" stroke="#8ab6da" stroke-width="0.9"/></svg><div class="t" style="left:257px;top:734.15px;font-size:14px;line-height:14px;color:#1e1e1e;letter-spacing:0.029px">zookeeper-shell</div><div class="t" style="left:543px;top:734.15px;font-size:14px;line-height:14px;color:#737373;letter-spacing:-0.14px">4/23/2020 2:57 PM</div><div class="t" style="left:686px;top:734.15px;font-size:14px;line-height:14px;color:#737373">Windows Batch File</div><div class="t" style="left:880px;top:734.15px;font-size:14px;line-height:14px;color:#737373">2</div><div class="t" style="left:891.5px;letter-spacing:-1.2px;top:734.15px;font-size:14px;line-height:14px;color:#737373">KB</div></div></div>
</body></html>
